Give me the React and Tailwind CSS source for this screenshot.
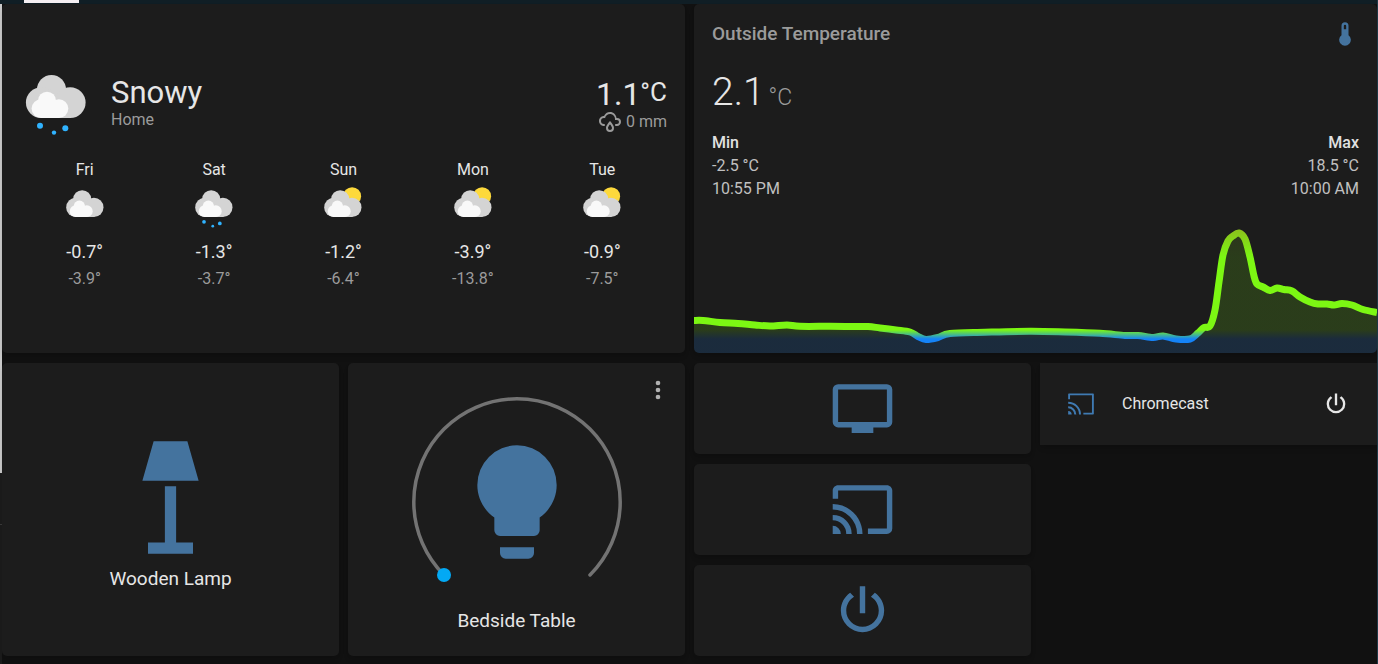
import { useState } from 'react';

// material design icon paths, 24x24
const ICONS = {
  rainy:
    'M6,14.03A1,1 0 0,1 7,15.03C7,15.58 6.55,16.03 6,16.03C3.24,16.03 1,13.79 1,11.03C1,8.27 3.24,6.03 6,6.03C7,3.68 9.3,2.03 12,2.03C15.43,2.03 18.24,4.69 18.5,8.06L19,8.03A4,4 0 0,1 23,12.03C23,14.23 21.21,16.03 19,16.03H18C17.45,16.03 17,15.58 17,15.03C17,14.47 17.45,14.03 18,14.03H19A2,2 0 0,0 21,12.03A2,2 0 0,0 19,10.03H17V9.03C17,6.27 14.76,4.03 12,4.03C9.5,4.03 7.45,5.84 7.06,8.21C6.73,8.09 6.37,8.03 6,8.03A3,3 0 0,0 3,11.03A3,3 0 0,0 6,14.03M12,14.15C12.18,14.39 12.37,14.66 12.56,14.94C13,15.56 14,17.03 14,18C14,19.11 13.1,20 12,20A2,2 0 0,1 10,18C10,17.03 11,15.56 11.44,14.94C11.63,14.66 11.82,14.4 12,14.15M12,11.03L11.5,11.59C11.5,11.59 10.65,12.55 9.79,13.81C8.93,15.06 8,16.56 8,18A4,4 0 0,0 12,22A4,4 0 0,0 16,18C16,16.56 15.07,15.06 14.21,13.81C13.35,12.55 12.5,11.59 12.5,11.59',
  thermometer:
    'M15 13V5A3 3 0 0 0 9 5V13A5 5 0 1 0 15 13M12 4A1 1 0 0 1 13 5V8H11V5A1 1 0 0 1 12 4Z',
  lamp: 'M9,2H15L17,9H7M11,10H13V20H16V22H8V20H11',
  bulb: 'M12,2A7,7 0 0,0 5,9C5,11.38 6.19,13.47 8,14.74V17A1,1 0 0,0 9,18H15A1,1 0 0,0 16,17V14.74C17.81,13.47 19,11.38 19,9A7,7 0 0,0 12,2M9,21A1,1 0 0,0 10,22H14A1,1 0 0,0 15,21V20H9V21Z',
  dots: 'M12,16A2,2 0 0,1 14,18A2,2 0 0,1 12,20A2,2 0 0,1 10,18A2,2 0 0,1 12,16M12,10A2,2 0 0,1 14,12A2,2 0 0,1 12,14A2,2 0 0,1 10,12A2,2 0 0,1 12,10M12,4A2,2 0 0,1 14,6A2,2 0 0,1 12,8A2,2 0 0,1 10,6A2,2 0 0,1 12,4Z',
  tv: 'M21,17H3V5H21M21,3H3A2,2 0 0,0 1,5V17A2,2 0 0,0 3,19H8V21H16V19H21A2,2 0 0,0 23,17V5A2,2 0 0,0 21,3Z',
  cast: 'M1,10V12A9,9 0 0,1 10,21H12C12,14.92 7.07,10 1,10M1,14V16A5,5 0 0,1 6,21H8A7,7 0 0,0 1,14M1,18V21H4A3,3 0 0,0 1,18M21,3H3C1.89,3 1,3.89 1,5V8H3V5H21V19H14V21H21A2,2 0 0,0 23,19V5C23,3.89 22.1,3 21,3Z',
  castThin:
    'M1.5,3H22.5L23,3.5V20.5L22.5,21H14V19.4H21.4V4.6H2.6V8H1V3.5ZM1,10V11.7A9.3,9.3 0 0,1 10.3,21H12A11,11 0 0,0 1,10M1,14V15.7A5.3,5.3 0 0,1 6.3,21H8A7,7 0 0,0 1,14M1,18V21H4A3,3 0 0,0 1,18',
  power:
    'M16.56,5.44L15.11,6.89C16.84,7.94 18,9.83 18,12A6,6 0 0,1 12,18A6,6 0 0,1 6,12C6,9.83 7.16,7.94 8.88,6.88L7.44,5.44C5.36,6.88 4,9.28 4,12A8,8 0 0,0 12,20A8,8 0 0,0 20,12C20,9.28 18.64,6.88 16.56,5.44M13,3H11V13H13',
};

const Icon = ({ name, className }) => (
  <svg viewBox="0 0 24 24" fill="currentColor" aria-hidden="true" className={className}>
    <path d={ICONS[name]} />
  </svg>
);

const forecast = [
  { day: 'Fri', high: '-0.7°', low: '-3.9°' },
  { day: 'Sat', high: '-1.3°', low: '-3.7°', snow: true },
  { day: 'Sun', high: '-1.2°', low: '-6.4°', sun: true },
  { day: 'Mon', high: '-3.9°', low: '-13.8°', sun: true },
  { day: 'Tue', high: '-0.9°', low: '-7.5°', sun: true },
];

// outside temperature over the day, in chart units (683 x 128)
const history = [
  [0, 95.5], [9, 95.5], [26, 97.5], [44, 98.5], [61, 100], [76, 101], [93, 100],
  [106, 101.3], [136, 101.3], [156, 101.5], [174, 101.5], [186, 103], [202, 105],
  [216, 107], [224, 111.5], [232, 114.5], [244, 112.5], [256, 108.5], [291, 107.3],
  [336, 106.3], [371, 107], [406, 108.3], [431, 110.5], [444, 110.5], [459, 112.5],
  [469, 111], [482, 114], [496, 114], [504, 108], [510, 102.5], [516, 101],
  [521, 85], [525, 57], [529, 30], [534, 16], [539, 11], [545, 8], [551, 14],
  [556, 32], [560, 51], [563, 59], [569, 62], [576, 65.5], [583, 63], [590, 64.5],
  [598, 66], [606, 72], [616, 77], [624, 79], [633, 79], [640, 80], [648, 78.5],
  [658, 80], [669, 84.5], [683, 87.5],
];

// smooth line through the points
const toPath = (pts) => {
  let d = `M${pts[0][0]},${pts[0][1]}`;
  for (let i = 0; i < pts.length - 1; i++) {
    const a = pts[i - 1] || pts[i];
    const b = pts[i];
    const c = pts[i + 1];
    const e = pts[i + 2] || c;
    d += `C${b[0] + (c[0] - a[0]) / 6},${b[1] + (c[1] - a[1]) / 6} ${c[0] - (e[0] - b[0]) / 6},${c[1] - (e[1] - b[1]) / 6} ${c[0]},${c[1]}`;
  }
  return d;
};

const WeatherIcon = ({ sun, snow, className }) => (
  <svg viewBox="24 70 64 64" aria-hidden="true" className={`overflow-visible ${className}`}>
    {sun && <circle cx="70.6" cy="84.6" r="14.4" fill="#fdd93c" />}
    <g fill="#d4d4d4">
      <circle cx="51.5" cy="89.5" r="14.5" />
      <circle cx="41.3" cy="102.6" r="15.4" />
      <circle cx="70.2" cy="102.6" r="15.4" />
      <path d="M41,95H71V118H41Z" />
    </g>
    <g fill="#f9f9f9">
      <circle cx="47" cy="100.7" r="9" />
      <circle cx="41" cy="108.6" r="9.4" />
      <circle cx="58.9" cy="108.6" r="9.4" />
      <path d="M41,104H59V118H41Z" />
    </g>
    {snow && (
      <g fill="#30b3ff">
        <circle cx="40" cy="125.7" r="3" />
        <circle cx="54" cy="132.6" r="2.2" />
        <circle cx="65.3" cy="128.3" r="3" />
      </g>
    )}
  </svg>
);

const WeatherCard = () => (
  <section className="col-span-2 min-h-[349px] rounded-[5px] bg-[#1c1c1c] px-[18px] pt-[66px] shadow-md">
    <div className="flex items-start pl-1">
      <WeatherIcon snow className="size-16 shrink-0" />
      <div className="pt-2 pl-[23px]">
        <h1 className="text-[31px] leading-[30px]">Snowy</h1>
        <p className="mt-0.5 text-base leading-5 text-[#9b9b9b]">Home</p>
      </div>
      <div className="ml-auto pt-2">
        <p className="flex items-start justify-end text-[32px] leading-8">
          1.1<span className="text-[26px] leading-7">°C</span>
        </p>
        <p className="flex items-center justify-end gap-1 leading-6 text-[#9b9b9b]">
          <Icon name="rainy" className="size-6" />0 mm
        </p>
      </div>
    </div>
    <ul className="mt-6 grid grid-cols-5 text-center">
      {forecast.map((f) => (
        <li key={f.day}>
          <p className="leading-6">{f.day}</p>
          <WeatherIcon sun={f.sun} snow={f.snow} className="mx-auto mt-[5px] size-10" />
          <p className="mt-3 text-lg leading-[26px]">{f.high}</p>
          <p className="mt-0.5 leading-6 text-[#9b9b9b]">{f.low}</p>
        </li>
      ))}
    </ul>
  </section>
);

const TemperatureCard = () => {
  const line = toPath(history);

  return (
    <section className="col-span-2 flex min-h-[349px] flex-col overflow-hidden rounded-[5px] bg-[#1c1c1c] pt-4 shadow-md">
      <div className="flex justify-between px-[18px]">
        <h2 className="text-[19px] leading-7 font-medium text-[#9b9b9b]">Outside Temperature</h2>
        <Icon name="thermometer" className="size-7 text-[#44739e]" />
      </div>
      <p className="mt-5 flex items-baseline gap-1 px-[18px] text-[39px] leading-12 font-light">
        2.1<span className="text-[23px] leading-6 text-[#9b9b9b]">°C</span>
      </p>
      <div className="mt-[15px] flex justify-between px-[18px] leading-[23px] text-[#c0c0c0]">
        <div>
          <h3 className="font-medium text-[#e1e1e1]">Min</h3>
          <p>-2.5 °C</p>
          <p>10:55 PM</p>
        </div>
        <div className="text-right">
          <h3 className="font-medium text-[#e1e1e1]">Max</h3>
          <p>18.5 °C</p>
          <p>10:00 AM</p>
        </div>
      </div>
      <svg viewBox="0 0 683 128" preserveAspectRatio="none" aria-hidden="true" className="mt-auto h-32 w-full">
        <defs>
          <linearGradient id="temp" gradientUnits="userSpaceOnUse" x1="0" y1="0" x2="0" y2="128">
            <stop offset="0.05" stopColor="#8ac41c" />
            <stop offset="0.25" stopColor="#7cf713" />
            <stop offset="0.82" stopColor="#7cf713" />
            <stop offset="0.89" stopColor="#1583f7" />
          </linearGradient>
        </defs>
        <path d={`${line}V128H0Z`} fill="url(#temp)" fillOpacity="0.15" />
        <path d={line} fill="none" stroke="url(#temp)" strokeWidth="7" />
      </svg>
    </section>
  );
};

const LampCard = () => (
  <button
    type="button"
    className="flex flex-col items-center rounded-[5px] bg-[#1c1c1c] pt-[67px] text-[19px] leading-7 shadow-md"
  >
    <Icon name="lamp" className="size-[135px] text-[#44739e]" />
    Wooden Lamp
  </button>
);

const LightCard = () => {
  const [brightness, setBrightness] = useState(0);
  // the track runs 270 degrees, from lower left to lower right
  const angle = ((135 + brightness * 2.7) * Math.PI) / 180;

  return (
    <section className="relative flex flex-col items-center rounded-[5px] bg-[#1c1c1c] pt-[34px] pb-[21px] shadow-md">
      <button type="button" aria-label="More" className="absolute top-[13px] right-[13px] text-[#b0b0b0]">
        <Icon name="dots" className="size-7" />
      </button>
      <div className="relative grid size-[210px] place-items-center">
        <svg viewBox="0 0 210 210" aria-hidden="true" className="col-start-1 row-start-1 size-full">
          <path
            d="M32,178A103.2,103.2 0 1 1 178,178"
            fill="none"
            stroke="#737373"
            strokeWidth="3.5"
            strokeLinecap="round"
          />
          <circle cx={105 + 103.2 * Math.cos(angle)} cy={105 + 103.2 * Math.sin(angle)} r="7" fill="#03a9f4" />
        </svg>
        <Icon name="bulb" className="col-start-1 row-start-1 size-[136px] text-[#44739e]" />
        <input
          id="brightness"
          type="range"
          min="0"
          max="100"
          value={brightness}
          onChange={(e) => setBrightness(Number(e.target.value))}
          className="absolute inset-0 size-full cursor-pointer opacity-0"
        />
      </div>
      <label htmlFor="brightness" className="text-[19px] leading-7">
        Bedside Table
      </label>
    </section>
  );
};

const RemoteButton = ({ icon, label }) => (
  <button
    type="button"
    aria-label={label}
    className="flex flex-1 items-center justify-center rounded-[5px] bg-[#1c1c1c] py-3 text-[#44739e] shadow-md"
  >
    <Icon name={icon} className="size-[65px]" />
  </button>
);

const App = () => {
  return (
    <div className="flex min-h-screen flex-col border-r border-[#1f3a48] bg-[#111111] font-['Roboto',sans-serif] text-[#e6e6e6]">
      {/* bottom edge of the toolbar with the active tab */}
      <header className="flex h-1 items-start bg-[#101e25] pl-6">
        <div className="h-[3px] w-[55px] bg-[#f4eef2]"></div>
      </header>
      <div className="flex flex-1">
        {/* sidebar edge */}
        <div className="flex w-0.5 flex-col bg-[#1c1c1c]">
          <div className="h-[71%] bg-[#c9c9c9]"></div>
          <div className="h-[8%] border-b border-[#3a3a3a]"></div>
        </div>
        <main className="grid flex-1 grid-cols-4 content-start gap-x-[9px] gap-y-2.5 pb-2">
          <WeatherCard />
          <TemperatureCard />
          <LampCard />
          <LightCard />
          <div className="flex flex-col gap-2.5">
            <RemoteButton icon="tv" label="TV" />
            <RemoteButton icon="cast" label="Cast" />
            <RemoteButton icon="power" label="Power" />
          </div>
          <div className="flex items-center self-start bg-[#1c1c1c] p-[27px] shadow-md">
            <Icon name="castThin" className="size-7 text-[#3f7ab2]" />
            <span className="ml-[27px]">Chromecast</span>
            <button type="button" aria-label="Turn off" className="ml-auto">
              <Icon name="power" className="size-7" />
            </button>
          </div>
        </main>
      </div>
    </div>
  );
};

export default App;
